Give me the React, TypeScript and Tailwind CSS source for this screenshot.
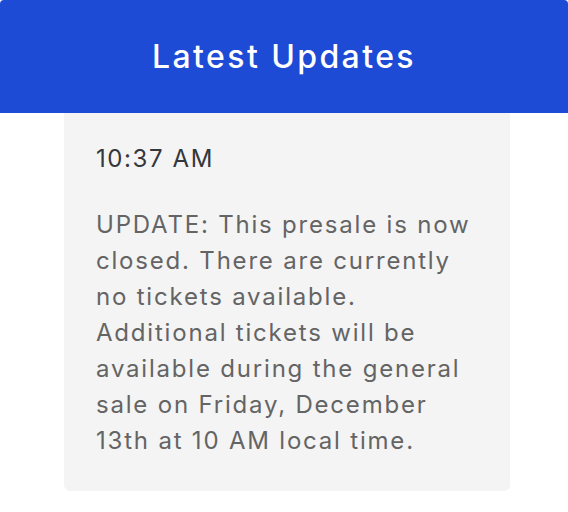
import React from "react";

export default function App() {
  return (
    <div className="w-[568px] h-[512px] bg-white font-['Inter',sans-serif]">
      {/* header */}
      <div className="h-[113px] bg-[#1d4bd5] flex items-center justify-center rounded-t-[4px]">
        <h1 className="text-white text-[32px] font-medium tracking-[2.4px]">Latest Updates</h1>
      </div>

      {/* update card */}
      <div className="mx-[64px] w-[446px] bg-[#f4f4f4] rounded-b-[6px] px-8 pt-[28px] pb-8">
        <p className="text-[#34373b] text-[24px] leading-[36px] tracking-[1.6px]">10:37 AM</p>
        <p className="mt-[30px] text-[#646464] text-[24px] leading-[36px] tracking-[1.8px] whitespace-nowrap">
          UPDATE: This presale is now
          <br />
          closed. There are currently
          <br />
          no tickets available.
          <br />
          Additional tickets will be
          <br />
          available during the general
          <br />
          sale on Friday, December
          <br />
          13th at 10 AM local time.
        </p>
      </div>
    </div>
  );
}
